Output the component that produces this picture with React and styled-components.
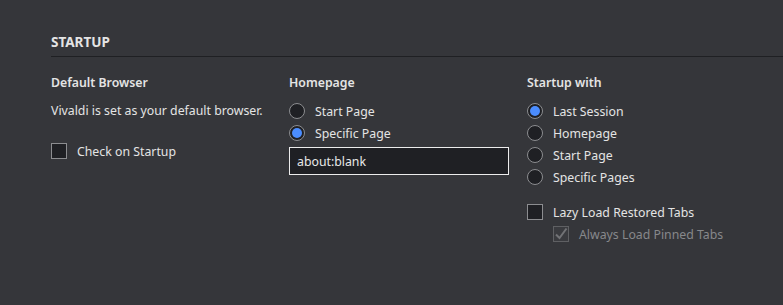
import React from 'react';
import styled, { createGlobalStyle } from 'styled-components';

const Global = createGlobalStyle`
body {
  margin: 0;
  background: #35363a;
}
`;

const Page = styled.div`
min-height: 305px;
box-sizing: border-box;
padding: 32px 0 0 51px;
background: #35363a;
color: #e4e4e4;
font-family: "Noto Sans", "Open Sans", sans-serif;
font-size: 12.3px;
`;

const SectionTitle = styled.div`
font-weight: 700;
font-size: 13.5px;
line-height: 20px;
padding-bottom: 4px;
border-bottom: 1px solid #1f2023;
`;

const Columns = styled.div`
display: grid;
grid-template-columns: 238px 238px 238px;
padding-top: 15px;
`;

const Column = styled.div`
display: flex;
flex-direction: column;
`;

const Heading = styled.div`
font-weight: 600;
line-height: 22px;
margin-bottom: 6px;
`;

const Row = styled.label`
display: flex;
align-items: center;
gap: 10px;
height: 22px;
margin-top: ${props => props.$top || 0}px;
margin-left: ${props => props.$indent || 0}px;
color: ${props => props.$disabled ? '#87888b' : '#e4e4e4'};
`;

const Text = styled.div`
line-height: 22px;
`;

const Radio = styled.span`
width: 16px;
height: 16px;
box-sizing: border-box;
border-radius: 50%;
border: 1px solid #8c8d90;
background: #1f2024;
display: flex;
align-items: center;
justify-content: center;
flex: none;
&::after {
  content: '';
  width: 10px;
  height: 10px;
  border-radius: 50%;
  background: ${props => props.$on ? '#4b8dff' : 'transparent'};
}
`;

const Box = styled.span`
width: 16px;
height: 16px;
box-sizing: border-box;
border: 1px solid ${props => props.$disabled ? '#5f6063' : '#8c8d90'};
background: ${props => props.$disabled ? '#3a3b3f' : '#1f2024'};
display: flex;
align-items: center;
justify-content: center;
flex: none;
`;

const Input = styled.div`
width: 220px;
height: 28px;
box-sizing: border-box;
margin-top: 3px;
border: 1px solid #ececec;
background: #1f2024;
padding: 0 7px;
display: flex;
align-items: center;
color: #e8e8e8;
`;

const Check = () => (
    <svg width="14" height="14" viewBox="0 0 14 14">
        <path d="M2 7.5 L5.5 11 L12.5 1.5" fill="none" stroke="#727376" strokeWidth="2"/>
    </svg>
);

export default function App() {
    return (
        <Page>
            <Global/>
            <SectionTitle>STARTUP</SectionTitle>
            <Columns>
                <Column>
                    <Heading>Default Browser</Heading>
                    <Text>Vivaldi is set as your default browser.</Text>
                    <Row $top={18}><Box/>Check on Startup</Row>
                </Column>
                <Column>
                    <Heading>Homepage</Heading>
                    <Row><Radio/>Start Page</Row>
                    <Row><Radio $on/>Specific Page</Row>
                    <Input>about:blank</Input>
                </Column>
                <Column>
                    <Heading>Startup with</Heading>
                    <Row><Radio $on/>Last Session</Row>
                    <Row><Radio/>Homepage</Row>
                    <Row><Radio/>Start Page</Row>
                    <Row><Radio/>Specific Pages</Row>
                    <Row $top={13}><Box/>Lazy Load Restored Tabs</Row>
                    <Row $indent={26} $disabled><Box $disabled><Check/></Box>Always Load Pinned Tabs</Row>
                </Column>
            </Columns>
        </Page>
    );
}
